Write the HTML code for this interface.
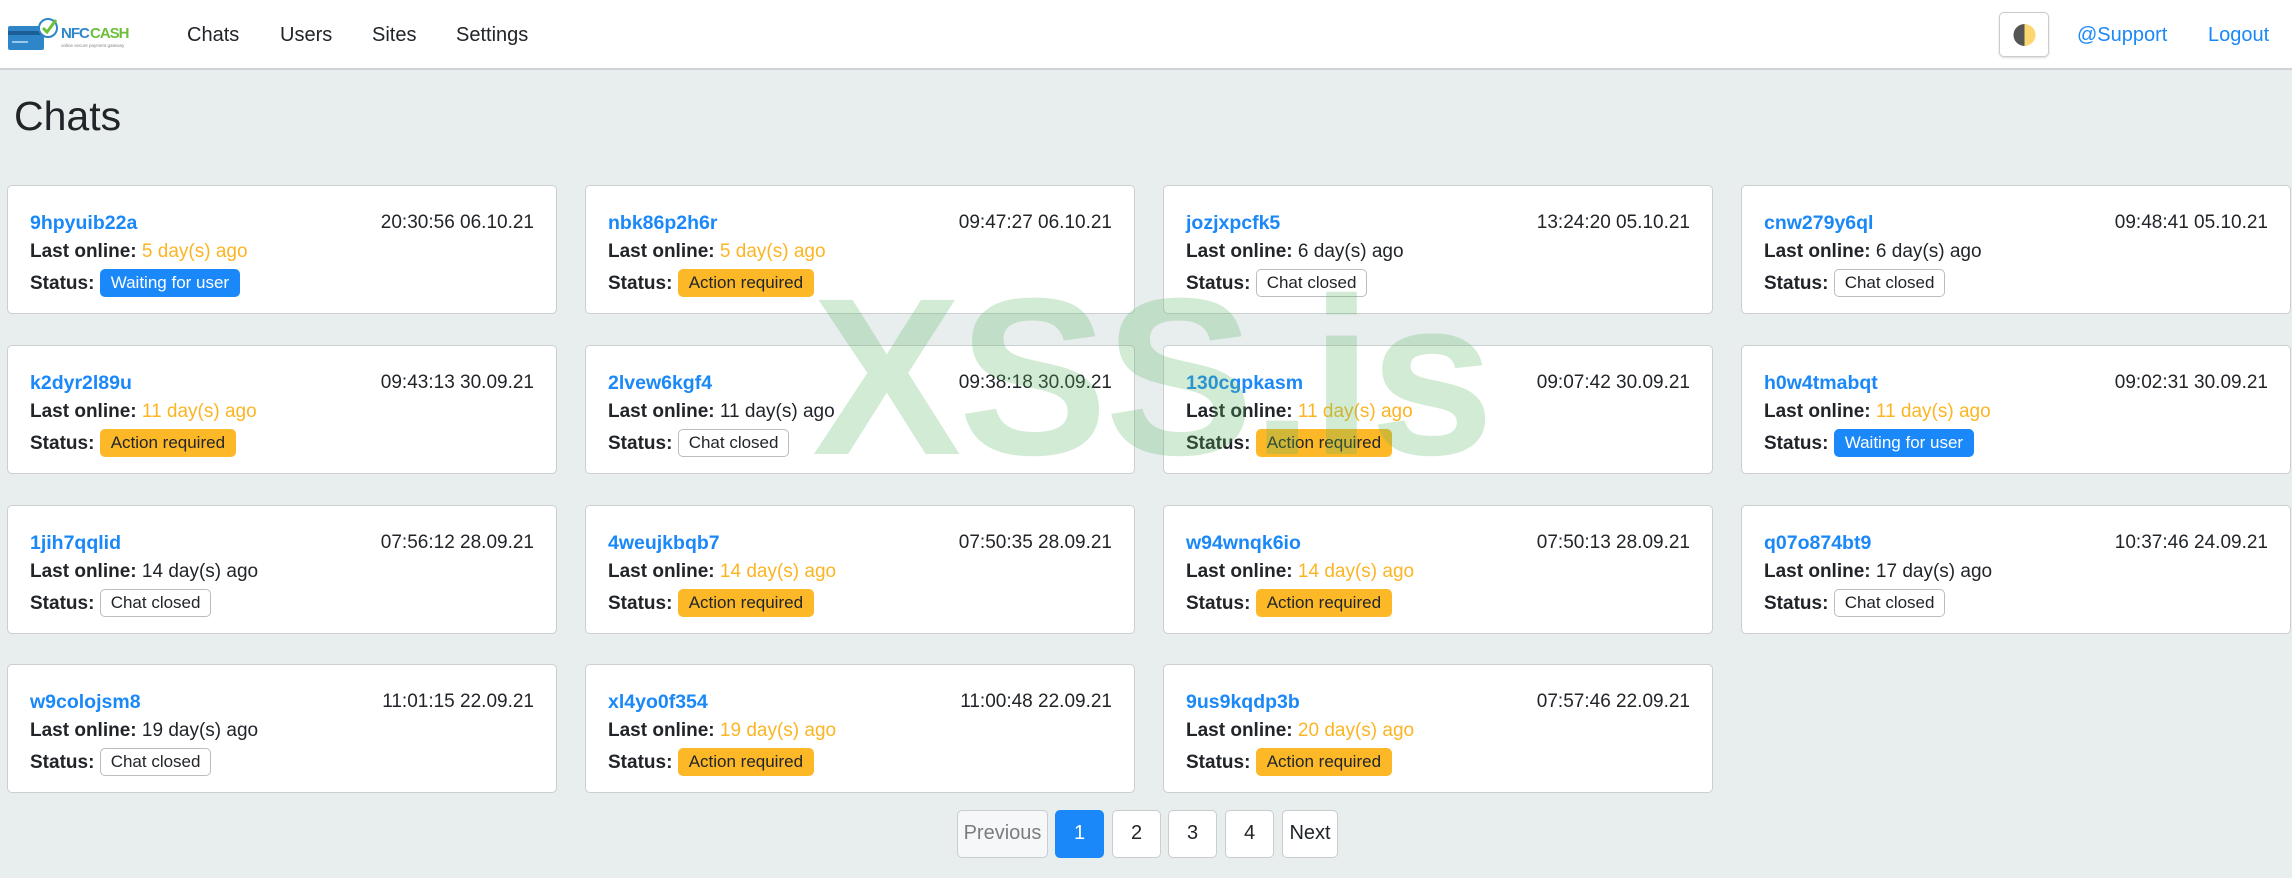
<!DOCTYPE html>
<html><head><meta charset="utf-8"><style>
*{box-sizing:border-box;margin:0;padding:0}
body{width:2292px;height:878px;overflow:hidden;background:#e8eded;font-family:"Liberation Sans",Arial,sans-serif;color:#212529;position:relative}
.nav{position:absolute;left:0;top:0;width:2292px;height:70px;background:#fff;border-bottom:2px solid #cfd3d5}
.nav a{position:absolute;top:24px;font-size:20px;color:#212529;text-decoration:none}
.nav .b{color:#1a88f8}
.theme{position:absolute;left:1999px;top:12px;width:50px;height:45px;border:1px solid #c9cccf;border-radius:5px;background:#fff;box-shadow:0 1px 2px rgba(0,0,0,.15)}
h1{position:absolute;left:14px;top:93px;font-size:41px;font-weight:400}
.card{position:absolute;width:550px;height:129px;background:#fff;border:1.5px solid #cbcfd2;border-radius:5px}
.card .id{position:absolute;left:22px;top:26px;color:#1a88f8;font-weight:bold;font-size:19.5px}
.card .dt{position:absolute;right:22px;top:26px;font-size:19px}
.card .lo{position:absolute;left:22px;top:55px;font-size:19px}
.card .st{position:absolute;left:22px;top:83px;font-size:19px;white-space:nowrap}
b{font-weight:bold}
.y{color:#fbb524}
.bd{display:inline-block;font-size:17px;padding:4px 11px;border-radius:5px;vertical-align:1px;margin-left:0}
.w{background:#1a88f8;color:#fff}
.a{background:#fdb828;color:#212529}
.c{background:#fff;border:1px solid #b9bdc0;padding:3px 10px}
.pg{position:absolute;top:810px;height:48px;border:1.5px solid #c9cdd0;border-radius:5px;background:#fff;font-size:20px;text-align:center;line-height:45px;color:#212529}
.wm{position:absolute;left:812px;top:265px;font-size:224px;font-weight:bold;color:rgba(90,180,100,.27);white-space:nowrap;pointer-events:none;line-height:1;letter-spacing:-3px}
</style></head><body>
<div class="nav">
<svg style="position:absolute;left:8px;top:16px" width="125" height="38" viewBox="0 0 125 38">
<rect x="0" y="10" width="36" height="24" rx="2" fill="#2e86c8"/><rect x="0" y="15" width="36" height="4" fill="#1b5f96"/><rect x="4" y="25" width="16" height="2" fill="#9cc8ea"/>
<circle cx="40" cy="12" r="9" fill="#fff" stroke="#2e86c8" stroke-width="2"/><path d="M35 12l4 4 9-12" stroke="#6cbf3a" stroke-width="3" fill="none"/>
<text x="53" y="22" font-family="Liberation Sans" font-weight="bold" font-size="15" fill="#2e86c8" letter-spacing="-1">NFC</text><text x="82" y="22" font-family="Liberation Sans" font-weight="bold" font-size="15" fill="#6cbf3a" letter-spacing="-1">CASH</text>
<text x="53" y="31" font-family="Liberation Sans" font-size="4.5" fill="#888">online secure payment gateway</text></svg>
<a style="left:187px">Chats</a><a style="left:280px">Users</a><a style="left:372px">Sites</a><a style="left:456px">Settings</a>
<div class="theme"><svg width="50" height="45" viewBox="0 0 50 45"><path d="M24.5 11a11 11 0 0 0 0 22z" fill="#555"/><path d="M24.5 11a11 11 0 0 1 0 22z" fill="#fcd670"/></svg></div>
<a class="b" style="left:2077px">@Support</a><a class="b" style="left:2208px">Logout</a>
</div>
<h1>Chats</h1>

<div class="card" style="left:7px;top:185px"><div class="id">9hpyuib22a</div><div class="dt">20:30:56 06.10.21</div><div class="lo"><b>Last online:</b> <span class="y">5 day(s) ago</span></div><div class="st"><b>Status:</b> <span class="bd w">Waiting for user</span></div></div>
<div class="card" style="left:585px;top:185px"><div class="id">nbk86p2h6r</div><div class="dt">09:47:27 06.10.21</div><div class="lo"><b>Last online:</b> <span class="y">5 day(s) ago</span></div><div class="st"><b>Status:</b> <span class="bd a">Action required</span></div></div>
<div class="card" style="left:1163px;top:185px"><div class="id">jozjxpcfk5</div><div class="dt">13:24:20 05.10.21</div><div class="lo"><b>Last online:</b> 6 day(s) ago</div><div class="st"><b>Status:</b> <span class="bd c">Chat closed</span></div></div>
<div class="card" style="left:1741px;top:185px"><div class="id">cnw279y6ql</div><div class="dt">09:48:41 05.10.21</div><div class="lo"><b>Last online:</b> 6 day(s) ago</div><div class="st"><b>Status:</b> <span class="bd c">Chat closed</span></div></div>

<div class="card" style="left:7px;top:345px"><div class="id">k2dyr2l89u</div><div class="dt">09:43:13 30.09.21</div><div class="lo"><b>Last online:</b> <span class="y">11 day(s) ago</span></div><div class="st"><b>Status:</b> <span class="bd a">Action required</span></div></div>
<div class="card" style="left:585px;top:345px"><div class="id">2lvew6kgf4</div><div class="dt">09:38:18 30.09.21</div><div class="lo"><b>Last online:</b> 11 day(s) ago</div><div class="st"><b>Status:</b> <span class="bd c">Chat closed</span></div></div>
<div class="card" style="left:1163px;top:345px"><div class="id">130cgpkasm</div><div class="dt">09:07:42 30.09.21</div><div class="lo"><b>Last online:</b> <span class="y">11 day(s) ago</span></div><div class="st"><b>Status:</b> <span class="bd a">Action required</span></div></div>
<div class="card" style="left:1741px;top:345px"><div class="id">h0w4tmabqt</div><div class="dt">09:02:31 30.09.21</div><div class="lo"><b>Last online:</b> <span class="y">11 day(s) ago</span></div><div class="st"><b>Status:</b> <span class="bd w">Waiting for user</span></div></div>

<div class="card" style="left:7px;top:505px"><div class="id">1jih7qqlid</div><div class="dt">07:56:12 28.09.21</div><div class="lo"><b>Last online:</b> 14 day(s) ago</div><div class="st"><b>Status:</b> <span class="bd c">Chat closed</span></div></div>
<div class="card" style="left:585px;top:505px"><div class="id">4weujkbqb7</div><div class="dt">07:50:35 28.09.21</div><div class="lo"><b>Last online:</b> <span class="y">14 day(s) ago</span></div><div class="st"><b>Status:</b> <span class="bd a">Action required</span></div></div>
<div class="card" style="left:1163px;top:505px"><div class="id">w94wnqk6io</div><div class="dt">07:50:13 28.09.21</div><div class="lo"><b>Last online:</b> <span class="y">14 day(s) ago</span></div><div class="st"><b>Status:</b> <span class="bd a">Action required</span></div></div>
<div class="card" style="left:1741px;top:505px"><div class="id">q07o874bt9</div><div class="dt">10:37:46 24.09.21</div><div class="lo"><b>Last online:</b> 17 day(s) ago</div><div class="st"><b>Status:</b> <span class="bd c">Chat closed</span></div></div>

<div class="card" style="left:7px;top:664px"><div class="id">w9colojsm8</div><div class="dt">11:01:15 22.09.21</div><div class="lo"><b>Last online:</b> 19 day(s) ago</div><div class="st"><b>Status:</b> <span class="bd c">Chat closed</span></div></div>
<div class="card" style="left:585px;top:664px"><div class="id">xl4yo0f354</div><div class="dt">11:00:48 22.09.21</div><div class="lo"><b>Last online:</b> <span class="y">19 day(s) ago</span></div><div class="st"><b>Status:</b> <span class="bd a">Action required</span></div></div>
<div class="card" style="left:1163px;top:664px"><div class="id">9us9kqdp3b</div><div class="dt">07:57:46 22.09.21</div><div class="lo"><b>Last online:</b> <span class="y">20 day(s) ago</span></div><div class="st"><b>Status:</b> <span class="bd a">Action required</span></div></div>

<div class="pg" style="left:957px;width:91px;background:#f5f7f8;color:#7a7d80">Previous</div>
<div class="pg" style="left:1055px;width:49px;background:#1a88f8;border-color:#1a88f8;color:#fff">1</div>
<div class="pg" style="left:1112px;width:49px">2</div>
<div class="pg" style="left:1168px;width:49px">3</div>
<div class="pg" style="left:1225px;width:49px">4</div>
<div class="pg" style="left:1282px;width:56px">Next</div>

<div class="wm">XSS.is</div>
</body></html>
